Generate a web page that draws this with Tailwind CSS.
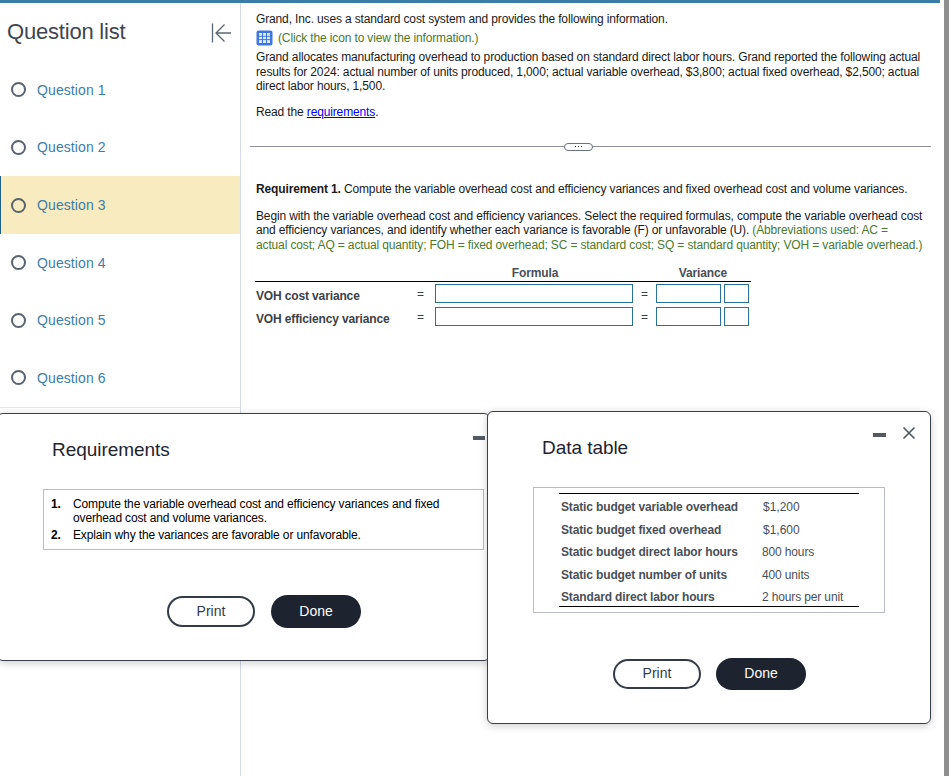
<!doctype html>
<html>
<head>
<meta charset="utf-8">
<script src="https://cdn.jsdelivr.net/npm/@tailwindcss/browser@4"></script>
</head>
<body class="bg-white">
<div class="relative w-[949px] h-[776px] overflow-hidden bg-white font-['Liberation_Sans',Arial,sans-serif] text-[12px] leading-[14px] tracking-[-0.14px] text-[#1a1a1a]">
  <div class="h-[3px] w-[940px] bg-[#3a7ca5]"></div>
  <div class="flex h-[773px]">
    <aside class="w-[241px] shrink-0 border-r border-[#d5dbe6] tracking-normal">
      <div class="flex items-center justify-between h-[58px] pl-[7px] pr-[9px]">
        <h2 class="text-[22px] leading-[28px] tracking-[-0.2px] text-[#3f4650]">Question list</h2>
        <svg class="w-[20px] h-[20px] mt-[1px]" viewBox="0 0 20 20" fill="none" stroke="#5c6670" stroke-width="1.3"><path d="M1.5 0.5v19M20 10H5M13.5 1.5L5 10l8.5 8.5"/></svg>
      </div>
      <ul class="text-[14px] tracking-[0.1px] text-[#3c7ea8] border-b border-[#e4e7ee]">
        <li class="flex items-center h-[57.6px] pl-[11px] gap-[11px]"><span class="w-[15px] h-[15px] rounded-full border-2 border-[#5a6470]"></span>Question 1</li>
        <li class="flex items-center h-[57.6px] pl-[11px] gap-[11px]"><span class="w-[15px] h-[15px] rounded-full border-2 border-[#5a6470]"></span>Question 2</li>
        <li class="flex items-center h-[58px] pl-[10px] gap-[11px] border-l border-[#1f5f8b] bg-[#f7ebbf]"><span class="w-[15px] h-[15px] rounded-full border-2 border-[#5a6470]"></span>Question 3</li>
        <li class="flex items-center h-[57px] pl-[11px] gap-[11px]"><span class="w-[15px] h-[15px] rounded-full border-2 border-[#5a6470]"></span>Question 4</li>
        <li class="flex items-center h-[58px] pl-[11px] gap-[11px]"><span class="w-[15px] h-[15px] rounded-full border-2 border-[#5a6470]"></span>Question 5</li>
        <li class="flex items-center h-[57.6px] pl-[11px] gap-[11px]"><span class="w-[15px] h-[15px] rounded-full border-2 border-[#5a6470]"></span>Question 6</li>
      </ul>
    </aside>
    <main class="flex-1 pl-[15px] pr-[18px] pt-[9px]">
      <p>Grand, Inc. uses a standard cost system and provides the following information.</p>
      <p class="flex items-center gap-[5px] mt-[4px] text-[#4a7a2c]">
        <svg class="w-[17px] h-[16px]" viewBox="0 0 17 16"><rect x="0.5" y="0.5" width="16" height="15" rx="2" fill="#3f78d8"/><path d="M3 3h11v10H3z" fill="#dbe7fb"/><path d="M6.5 3v10M10.5 3v10M3 6.3h11M3 9.6h11" stroke="#3f78d8" stroke-width="1"/></svg>
        (Click the icon to view the information.)
      </p>
      <p class="mt-[4px] w-[670px] leading-[14.5px]">Grand allocates manufacturing overhead to production based on standard direct labor hours. Grand reported the following actual results for 2024: actual number of units produced, 1,000; actual variable overhead, $3,800; actual fixed overhead, $2,500; actual direct labor hours, 1,500.</p>
      <p class="mt-[11px]">Read the <a class="text-[#0000ee] underline">requirements</a>.</p>
      <div class="relative mt-[27px] -ml-[6px] w-[681px] h-px bg-[#8f8f98]">
        <span class="absolute left-[314px] -top-[3px] w-[29px] h-[8px] rounded-[4px] border border-[#6b7280] bg-white flex items-center justify-center gap-[2px]">
          <i class="w-px h-px bg-[#333]"></i><i class="w-px h-px bg-[#333]"></i><i class="w-px h-px bg-[#333]"></i>
        </span>
      </div>
      <p class="mt-[35px]"><b>Requirement 1.</b> Compute the variable overhead cost and efficiency variances and fixed overhead cost and volume variances.</p>
      <p class="mt-[13px] w-[672px] leading-[14.5px]">Begin with the variable overhead cost and efficiency variances. Select the required formulas, compute the variable overhead cost and efficiency variances, and identify whether each variance is favorable (F) or unfavorable (U). <span class="text-[#4a7a2c]">(Abbreviations used: AC =<br>actual cost; AQ = actual quantity; FOH = fixed overhead; SC = standard cost; SQ = standard quantity; VOH = variable overhead.)</span></p>
      <div class="w-[496px] -ml-px mt-[14px]">
        <div class="flex h-[15px] border-b border-black box-content font-bold text-[#4a4f57]">
          <span class="ml-[181px] w-[198px] text-center">Formula</span>
          <span class="ml-[22px] w-[94px] text-center">Variance</span>
        </div>
        <div class="flex items-center h-[23px] font-bold text-[#3c4148]">
          <span class="w-[162px] pl-px pt-[5px]">VOH cost variance</span><span class="w-[18px] font-normal">=</span>
          <span class="w-[198px] h-[19px] border border-[#2a7298]"></span><span class="w-[23px] text-center font-normal">=</span>
          <span class="w-[65px] h-[19px] border border-[#2a7298]"></span><span class="ml-[3px] w-[25px] h-[19px] border border-[#2a7298]"></span>
        </div>
        <div class="flex items-center h-[23px] font-bold text-[#3c4148]">
          <span class="w-[162px] pl-px pt-[5px]">VOH efficiency variance</span><span class="w-[18px] font-normal">=</span>
          <span class="w-[198px] h-[19px] border border-[#2a7298]"></span><span class="w-[23px] text-center font-normal">=</span>
          <span class="w-[65px] h-[19px] border border-[#2a7298]"></span><span class="ml-[3px] w-[25px] h-[19px] border border-[#2a7298]"></span>
        </div>
      </div>
    </main>
  </div>

  <section class="absolute left-[-3px] top-[413px] w-[493px] h-[248px] bg-white border border-[#3a3f47] rounded-[6px] shadow-[0_2px_8px_rgba(0,0,0,0.2)]">
    <h3 class="absolute left-[54px] top-[24px] text-[19px] leading-[24px] tracking-[-0.05px] text-[#1f2430]">Requirements</h3>
    <span class="absolute left-[475px] top-[22px] w-[12px] h-[4px] bg-[#555a62]"></span>
    <div class="absolute left-[45px] top-[75px] w-[441px] h-[61px] border border-[#b9bcc2] text-black">
      <ol class="pl-[7px] pt-[7px]">
        <li class="flex"><b class="w-[22px] shrink-0">1.</b><span>Compute the variable overhead cost and efficiency variances and fixed overhead cost and volume variances.</span></li>
        <li class="flex mt-[3px]"><b class="w-[22px] shrink-0">2.</b><span>Explain why the variances are favorable or unfavorable.</span></li>
      </ol>
    </div>
    <div class="absolute left-[169px] top-[181px] flex items-center gap-[16px] text-[14px] tracking-normal">
      <span class="w-[88px] h-[31px] pb-[2px] rounded-full border-2 border-[#343a46] flex items-center justify-center text-[#343a46]">Print</span>
      <span class="w-[90px] h-[33px] pb-[2px] rounded-full bg-[#1e2330] flex items-center justify-center text-white">Done</span>
    </div>
  </section>

  <section class="absolute left-[487px] top-[411px] w-[444px] h-[313px] bg-white border border-[#3a3f47] rounded-[6px] shadow-[0_2px_8px_rgba(0,0,0,0.2)]">
    <h3 class="absolute left-[54px] top-[24px] text-[19px] leading-[24px] tracking-[-0.05px] text-[#1f2430]">Data table</h3>
    <span class="absolute left-[385px] top-[21px] w-[13px] h-[4px] bg-[#555a62]"></span>
    <svg class="absolute left-[414px] top-[14px] w-[14px] h-[14px]" viewBox="0 0 14 14" fill="none" stroke="#4b5563" stroke-width="1.6"><path d="M1.5 1.5l11 11M12.5 1.5l-11 11"/></svg>
    <div class="absolute left-[45px] top-[75px] w-[352px] h-[126px] border border-[#b9bcc2]">
      <div class="ml-[25px] mt-[5px] w-[300px] h-[114px] border-y border-black text-[#4a4f57]">
        <div class="flex items-center h-[22.6px] mt-[2px]"><b class="w-[202px] pl-[2px]">Static budget variable overhead</b><span class="pl-[2px] tracking-normal">$1,200</span></div>
        <div class="flex items-center h-[22.6px]"><b class="w-[202px] pl-[2px]">Static budget fixed overhead</b><span class="pl-[2px] tracking-normal">$1,600</span></div>
        <div class="flex items-center h-[22.6px]"><b class="w-[201px] pl-[2px]">Static budget direct labor hours</b><span class="pl-[2px]">800 hours</span></div>
        <div class="flex items-center h-[22.6px]"><b class="w-[201px] pl-[2px]">Static budget number of units</b><span class="pl-[2px]">400 units</span></div>
        <div class="flex items-center h-[22px]"><b class="w-[201px] pl-[2px]">Standard direct labor hours</b><span class="pl-[2px]">2 hours per unit</span></div>
      </div>
    </div>
    <div class="absolute left-[125px] top-[246px] flex items-center gap-[15px] text-[14px] tracking-normal">
      <span class="w-[88px] h-[30px] pb-[2px] rounded-full border-2 border-[#343a46] flex items-center justify-center text-[#343a46]">Print</span>
      <span class="w-[90px] h-[32px] pb-[2px] rounded-full bg-[#1e2330] flex items-center justify-center text-white">Done</span>
    </div>
  </section>
  <div class="absolute right-0 top-0 bottom-0 w-[5px] bg-[#8f8f8f]"></div>
</div>
</body>
</html>
